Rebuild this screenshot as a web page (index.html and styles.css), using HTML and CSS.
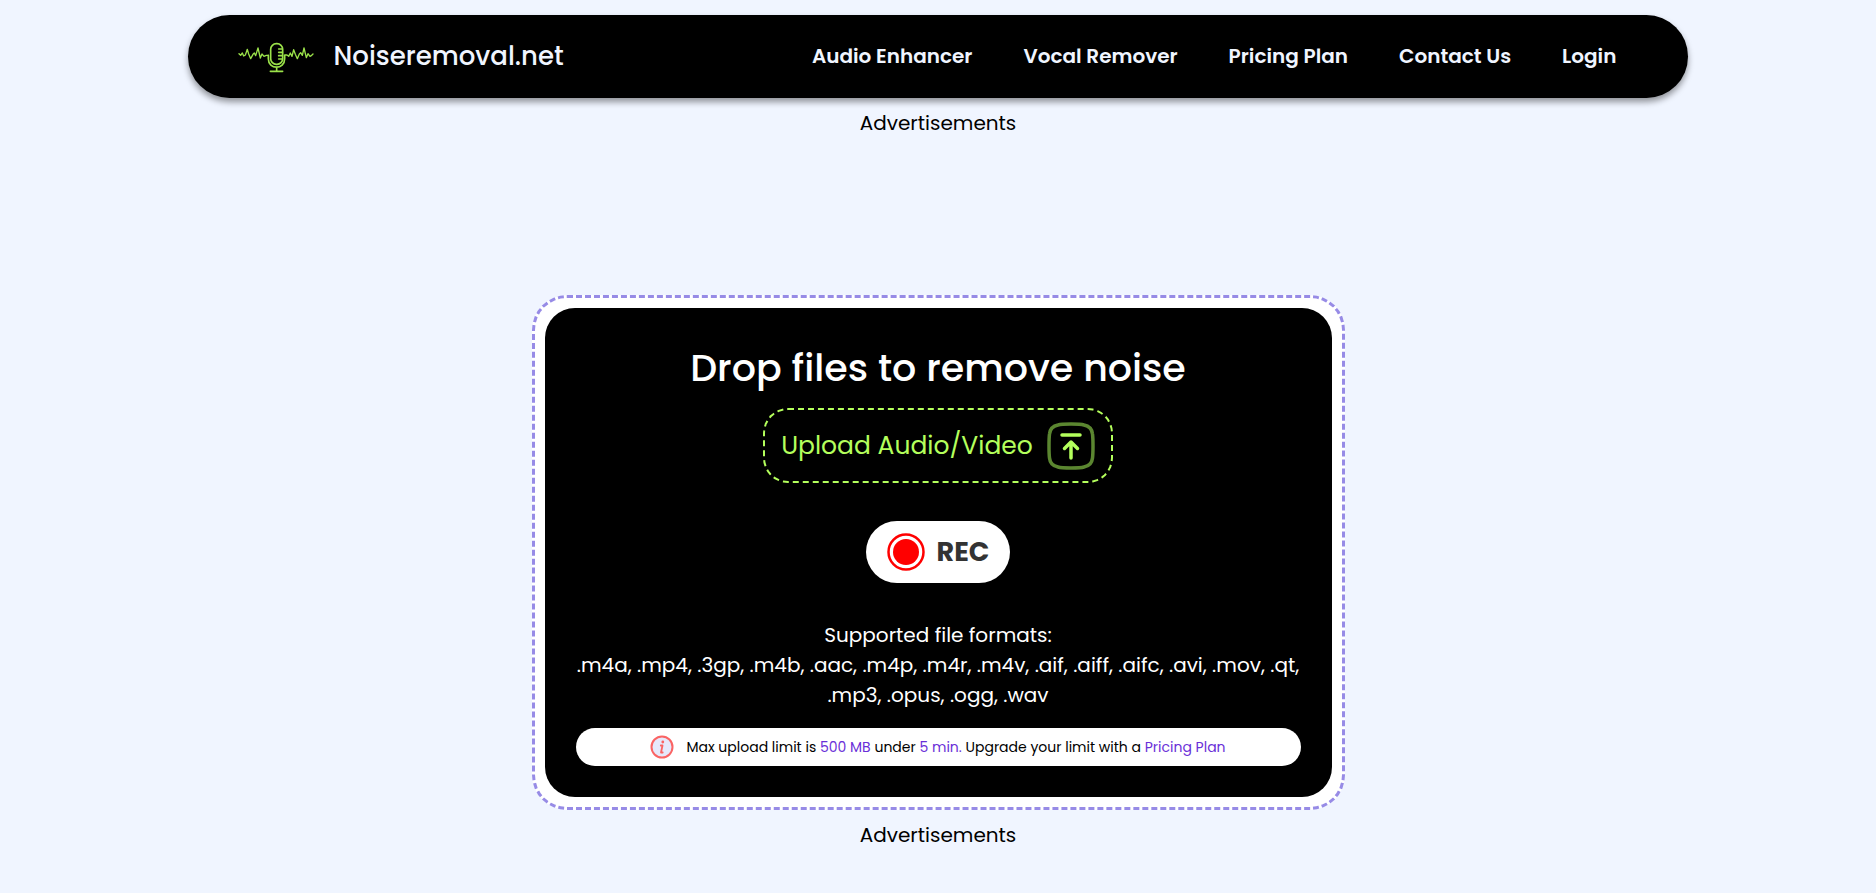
FILE: index.html
```
<!DOCTYPE html>
<html lang="en">

<head>
    <meta charset="UTF-8">
    <meta name="viewport" content="width=device-width, initial-scale=1.0">
    <title>Noiseremoval.net</title>
    <link rel="stylesheet" href="styles.css">
</head>

<body>

    <!-- top bar -->
    <header class="header">
        <a href="#" class="brand">
            <svg class="logo" viewBox="40 24 228 105" fill="none" stroke="#9be24a" stroke-linecap="round" stroke-linejoin="round">
                <path stroke-width="4" d="M43 71l5 5 5-7 4 9 5-3 6-17 4 14 6 14 7-13 4-4 4 8 7-23 7 30 5-12 6 7 7-3h6" />
                <path stroke-width="4" d="M181 75h6l5 4 5-10 5 10 5-20 5 14 6 13 6-14 4-4 5 8 5-22 7 29 5-12 6 8 5-3 4-4" />
                <rect x="138" y="41" width="36" height="62" rx="17" stroke-width="5" />
                <path stroke-width="5" d="M131 76v10c0 34 49 34 49 0V76M156 112v12M137 124h37M162 57h11M162 67h11M162 77h11M162 87h11" />
            </svg>
            <span class="brand-name">Noiseremoval.net</span>
        </a>
        <nav class="nav">
            <a href="#">Audio Enhancer</a>
            <a href="#">Vocal Remover</a>
            <a href="#">Pricing Plan</a>
            <a href="#">Contact Us</a>
            <a href="#">Login</a>
        </nav>
    </header>

    <main>
        <div class="ads ads-top">Advertisements</div>

        <!-- drop area -->
        <div class="drop-border">
            <div class="drop-box">
                <h1 class="title">Drop files to remove noise</h1>

                <button type="button" class="upload">
                    Upload Audio/Video
                    <svg class="upload-icon" viewBox="0 0 48 48" fill="none" stroke="#b4ff5c" stroke-width="3.500" stroke-linecap="round" stroke-linejoin="round">
                        <path stroke="#5b8630" d="M24 2C18 2 14 2 11 3C6 4 3 7 2.500 12C2 16 2 19 2 24s0 8 .5 12C3 41 6 44 11 45c3 1 7 1 13 1s10 0 13-1c5-1 8-4 8.500-9C46 32 46 29 46 24s0-8-.5-12C45 7 42 4 37 3C34 2 30 2 24 2z" />
                        <path d="M15 13h18M24 36V20M17.500 26.500l6.500-6.500 6.500 6.500" />
                    </svg>
                </button>

                <button type="button" class="rec">
                    <svg class="rec-icon" viewBox="0 0 38 38">
                        <circle cx="19" cy="19" r="17.500" fill="none" stroke="#f00" stroke-width="2.500" />
                        <circle cx="19" cy="19" r="13" fill="#f00" />
                    </svg>
                    REC
                </button>

                <p class="formats">
                    Supported file formats:<br>
                    .m4a, .mp4, .3gp, .m4b, .aac, .m4p, .m4r, .m4v, .aif, .aiff, .aifc, .avi, .mov, .qt, .mp3, .opus, .ogg, .wav
                </p>

                <div class="limit">
                    <svg class="info-icon" viewBox="0 0 24 24">
                        <circle cx="12" cy="12" r="10.500" fill="#e6e9fb" stroke="#fa6464" stroke-width="2" />
                        <circle cx="12.800" cy="7" r="1.400" fill="#fa6464" />
                        <path d="M10.800 10.500h1.700l-1.500 7h1.700" fill="none" stroke="#fa6464" stroke-width="1.800" stroke-linecap="round" stroke-linejoin="round" />
                    </svg>
                    <p>Max upload limit is <span>500 MB</span> under <span>5 min.</span> Upgrade your limit with a <a href="#">Pricing Plan</a></p>
                </div>
            </div>
        </div>

        <div class="ads">Advertisements</div>
    </main>

</body>

</html>
```
FILE: styles.css
```
* {
    margin: 0;
    padding: 0;
    box-sizing: border-box;
}

body {
    padding-top: 15px;
    background-color: #f0f5ff;
    font-family: Poppins, Inter, sans-serif;
    font-size: 20px;
    line-height: 30px;
    color: #000;
}

a {
    text-decoration: none;
}

button {
    font-family: inherit;
    cursor: pointer;
}

.header {
    width: 80%;
    min-height: 83px;
    margin: 0 auto;
    padding: 0 72px 2px 50px;
    display: flex;
    align-items: center;
    justify-content: space-between;
    background-color: #000;
    border-radius: 42px;
    box-shadow: 0 4px 6px rgba(0, 0, 0, 0.4);
}

.brand {
    display: flex;
    align-items: center;
    gap: 20px;
    color: #f0f5ff;
}

.logo {
    width: 76px;
    height: 35px;
}

.brand-name {
    font-size: 26px;
    font-weight: 500;
}

.nav {
    display: flex;
    gap: 51px;
}

.nav a {
    color: #f0f5ff;
    font-weight: 600;
}

.ads {
    padding-top: 10px;
    text-align: center;
}

.ads-top {
    min-height: 197px;
}

.drop-border {
    width: fit-content;
    max-width: 813px;
    margin: 0 auto;
    padding: 10px;
    background-color: #fff;
    border: 3px dashed #978be6;
    border-radius: 35px;
}

.drop-box {
    padding: 30px 31px 31px;
    display: flex;
    flex-direction: column;
    align-items: center;
    background-color: #000;
    border-radius: 30px;
    color: #fff;
}

.title {
    font-size: 38px;
    font-weight: 500;
    line-height: 60px;
}

.upload {
    height: 75px;
    margin-top: 10px;
    padding: 0 16px;
    display: flex;
    align-items: center;
    gap: 14px;
    background-color: #000;
    border: 2px dashed #b4ff5c;
    border-radius: 25px;
    color: #b4ff5c;
    font-size: 25px;
}

.upload-icon {
    width: 48px;
    height: 48px;
}

.rec {
    height: 62px;
    margin-top: 38px;
    padding: 0 21px;
    display: flex;
    align-items: center;
    gap: 12px;
    background-color: #fff;
    border: none;
    border-radius: 31px;
    color: #333;
    font-size: 27px;
    font-weight: 700;
}

.rec-icon {
    width: 38px;
    height: 38px;
}

.formats {
    margin-top: 37px;
    text-align: center;
}

.limit {
    width: 100%;
    height: 38px;
    margin-top: 18px;
    display: flex;
    align-items: center;
    justify-content: center;
    gap: 12px;
    background-color: #fff;
    border-radius: 19px;
    color: #000;
    font-size: 14px;
}

.limit span,
.limit a {
    color: #6a2fd8;
}

.info-icon {
    width: 24px;
    height: 24px;
}
```
